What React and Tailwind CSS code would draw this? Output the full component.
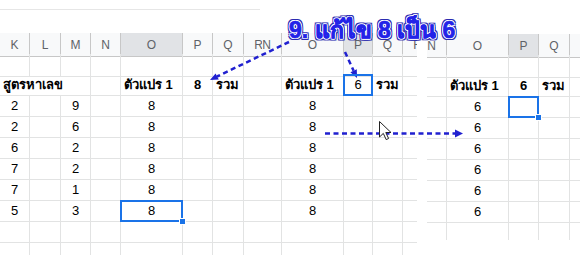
import React from 'react'

const BLUE = 'border-[#1a73e8]'

// one spreadsheet cell
const Cell = ({ c }) => {
  const align = c.left ? 'justify-start pl-[3px]' : 'justify-center'
  return (
    <div
      className={
        'relative flex items-center whitespace-nowrap border-r border-b border-[#e2e3e3] text-[13px] text-black ' +
        align +
        (c.span ? ' col-span-3' : '') +
        (c.bold ? ' font-bold' : '')
      }
    >
      {c.t}
      {c.sel && (
        <div className={'absolute z-10 top-[-1px] left-[-1px] right-[-1px] bottom-[-1px] border-2 ' + BLUE}></div>
      )}
      {c.handle && (
        <div className="absolute z-20 right-[-4px] bottom-[-4px] w-[7px] h-[7px] bg-[#1a73e8] border border-white"></div>
      )}
    </div>
  )
}

const Header = ({ letters, hl }) =>
  letters.map((l, i) => (
    <div
      key={l + i}
      className={
        'h-[24px] flex items-center justify-center border-r border-b border-[#c7c7c7] text-[12px] text-[#5f6368] ' +
        (i === hl ? 'bg-[#e1e3e6]' : 'bg-[#f8f9fa]')
      }
    >
      {l}
    </div>
  ))

const Rows = ({ rows }) =>
  rows.map((r, ri) => (
    <React.Fragment key={ri}>
      {r.map((c, ci) => (
        <Cell key={ci} c={c} />
      ))}
    </React.Fragment>
  ))

const e = () => ({})
const empty = (n) => Array.from({ length: n }, e)

const left = [
  [{ t: 2 }, {}, { t: 9 }, {}, { t: 8 }, {}, {}, {}],
  [{ t: 2 }, {}, { t: 6 }, {}, { t: 8 }, {}, {}, {}],
  [{ t: 6 }, {}, { t: 2 }, {}, { t: 8 }, {}, {}, {}],
  [{ t: 7 }, {}, { t: 2 }, {}, { t: 8 }, {}, {}, {}],
  [{ t: 7 }, {}, { t: 1 }, {}, { t: 8 }, {}, {}, {}],
  [{ t: 5 }, {}, { t: 3 }, {}, { t: 8, sel: true, handle: true }, {}, {}, {}],
]

const Arrows = () => (
  <svg className="absolute inset-0 pointer-events-none" width="580" height="255">
    <g stroke="#2020d0" strokeWidth="2.5" strokeDasharray="5 3.5" fill="none">
      <line x1="289" y1="42" x2="217" y2="76.5" />
      <line x1="345" y1="52" x2="353.6" y2="70.7" />
      <line x1="325" y1="133.5" x2="455" y2="133.5" />
    </g>
    <g fill="#2020d0">
      <polygon points="210,80 218.8,79.6 215.6,73.4" />
      <polygon points="357,78 356.8,69.2 350.4,72.2" />
      <polygon points="463,133.5 455,129.5 455,137.5" />
    </g>
    {/* mouse pointer */}
    <path
      d="M379.5 121.5 L379.5 137 L383.3 133.4 L386.2 139.6 L388.6 138.5 L385.8 132.5 L391 132.5 Z"
      fill="#fff"
      stroke="#222"
      strokeWidth="1"
      strokeLinejoin="round"
    />
  </svg>
)

export default function App() {
  return (
    <div className="relative w-[580px] h-[255px] overflow-hidden bg-white font-['Liberation_Sans',Arial,sans-serif]">
      <div className="flex items-start">
        {/* first sheet */}
        <div className="w-[262px] h-[255px] overflow-hidden flex flex-col">
          <div className="h-[10px] w-[260px] border-b border-[#e6e6e6] shrink-0"></div>
          <div className="h-[23px] shrink-0"></div>
          <div className="grid grid-cols-[30px_31px_30px_30px_62px_30px_31px_30px] auto-rows-[21px] w-[274px]">
            <Header letters={['K', 'L', 'M', 'N', 'O', 'P', 'Q', 'R']} hl={4} />
            {empty(8).map((c, i) => (
              <div key={i} className="h-[23px] border-r border-b border-[#e2e3e3]"></div>
            ))}
            <Rows
              rows={[
                [{ t: 'สูตรหาเลข', bold: true, left: true, span: true }, {}, { t: 'ตัวแปร 1', bold: true, left: true }, { t: 8, bold: true }, { t: 'รวม', bold: true, left: true }, {}],
                ...left,
                empty(8),
                empty(8),
              ]}
            />
          </div>
        </div>

        {/* second sheet */}
        <div className="w-[155px] h-[250px] mt-[33px] overflow-hidden">
          <div className="ml-[-10px] grid grid-cols-[30px_62px_29px_30px_30px] auto-rows-[21px] w-[181px]">
            <Header letters={['N', 'O', 'P', 'Q', 'R']} hl={2} />
            {empty(5).map((c, i) => (
              <div key={i} className="h-[23px] border-r border-b border-[#e2e3e3]"></div>
            ))}
            <Rows
              rows={[
                [{}, { t: 'ตัวแปร 1', bold: true, left: true }, { t: 6, sel: true }, { t: 'รวม', bold: true, left: true }, {}],
                ...[0, 1, 2, 3, 4, 5].map(() => [{}, { t: 8 }, {}, {}, {}]),
                empty(5),
                empty(5),
              ]}
            />
          </div>
        </div>

        <div className="w-[10px] shrink-0"></div>

        {/* third sheet */}
        <div className="w-[153px] h-[206px] mt-[34px] overflow-hidden">
          <div className="ml-[-10px] grid grid-cols-[30px_62px_30px_31px_30px] auto-rows-[21px] w-[183px]">
            <Header letters={['N', 'O', 'P', 'Q', 'R']} hl={2} />
            {empty(5).map((c, i) => (
              <div key={i} className="h-[23px] border-r border-b border-[#e2e3e3]"></div>
            ))}
            <Rows
              rows={[
                [{}, { t: 'ตัวแปร 1', bold: true, left: true }, { t: 6, bold: true }, { t: 'รวม', bold: true, left: true }, {}],
                [{}, { t: 6 }, { sel: true, handle: true }, {}, {}],
                ...[0, 1, 2, 3, 4].map(() => [{}, { t: 6 }, {}, {}, {}]),
                empty(5),
              ]}
            />
          </div>
        </div>
      </div>

      <Arrows />

      <div className="absolute left-[289px] top-[13px] text-[23px] font-bold text-[#2323e8] whitespace-nowrap [-webkit-text-stroke:0.7px_#2323e8] [text-shadow:-1px_-1px_0_#fff,1px_-1px_0_#fff,-1px_1px_0_#fff,1px_1px_0_#fff,0_-1px_0_#fff,0_1px_0_#fff,-1px_0_0_#fff,1px_0_0_#fff,-2px_-2px_0_#2b2bb0,2px_-2px_0_#2b2bb0,-2px_2px_0_#2b2bb0,2px_2px_0_#2b2bb0,0_-2px_0_#2b2bb0,0_2px_0_#2b2bb0,-2px_0_0_#2b2bb0,2px_0_0_#2b2bb0]">
        9. แก้ไข 8 เป็น 6
      </div>
    </div>
  )
}
